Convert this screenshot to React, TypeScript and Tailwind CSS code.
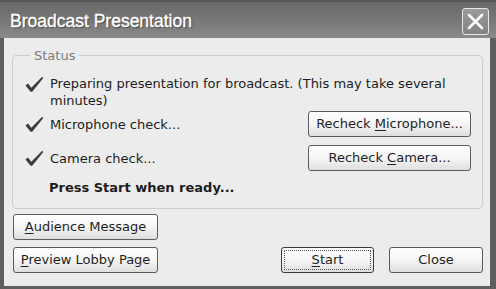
import React from 'react';

function Tick() {
  return (
    <svg width="19" height="17" viewBox="0 0 19 17" className="shrink-0">
      <path d="M0.5 9.5 L3 7.5 L6.3 11.8 L17.2 0.8 L18.3 1.9 L7.2 15.8 L5.6 15.8 Z" fill="#3b3b3b" />
    </svg>
  );
}

interface BtnProps {
  children: React.ReactNode;
  className?: string;
  focused?: boolean;
}

function Btn({ children, className = '', focused = false }: BtnProps) {
  return (
    <button
      className={`h-[26px] rounded-[3px] border ${focused ? 'border-[#3a3a3a]' : 'border-[#5c5c5c]'} bg-gradient-to-b from-[#ffffff] via-[#f6f6f6] to-[#dedede] p-[2px] text-[13px] text-[#1e1e1e] ${className}`}
    >
      <span
        className={`flex h-full w-full items-center justify-center whitespace-pre rounded-[1px] border ${focused ? 'border-dotted border-[#555]' : 'border-transparent'}`}
      >
        {children}
      </span>
    </button>
  );
}

export default function App() {
  return (
    <div className="flex h-[289px] w-[496px] flex-col bg-[#5f5f5f] font-['DejaVu_Sans',sans-serif]">
      {/* Title bar */}
      <div className="flex h-[38px] shrink-0 items-center justify-between border-t-2 border-[#555] bg-gradient-to-b from-[#6a6a6a] via-[#777777] to-[#8a8a8a] pl-[10px] pr-[7px]">
        <span className="pt-[3px] font-['Liberation_Sans',Arial,sans-serif] text-[17.5px] text-white [-webkit-text-stroke:0.35px_#fff] [text-shadow:1px_1px_1px_#3a3a3a]">
          Broadcast Presentation
        </span>
        <div className="mt-[3px] flex h-[27px] w-[27px] items-center justify-center rounded-[3px] border border-[#e8e8e8] bg-gradient-to-b from-[#9a9a9a] to-[#828282]">
          <svg width="17" height="17" viewBox="0 0 17 17">
            <path d="M2 2 L15 15 M15 2 L2 15" stroke="#fff" strokeWidth="2.6" strokeLinecap="round" />
          </svg>
        </div>
      </div>

      {/* Body */}
      <div className="mb-[3px] ml-[4px] mr-[6px] flex flex-1 flex-col bg-[#ececec] pl-[8px] pr-[7px] pt-[10px] text-[13px] text-[#1c1c1c]">
        <fieldset className="h-[161px] rounded-[4px] border border-[#cdcdcd] pl-[12px] pr-[11px]">
          <legend className="ml-[5px] px-[4px] text-[13px] leading-[15px] text-[#7c7c7c]">Status</legend>

          <div className="mt-[12px] flex items-start gap-[6px] leading-[17px]">
            <span className="pt-[1px]"><Tick /></span>
            <span>
              Preparing presentation for broadcast. (This may take several
              <br />
              minutes)
            </span>
          </div>

          <div className="mt-[2px] flex h-[26px] items-center">
            <Tick />
            <span className="ml-[6px] flex-1 pt-[1px]">Microphone check...</span>
            <Btn className="w-[163px]">
              {'Recheck '}<u className="underline-offset-2">M</u>{'icrophone...'}
            </Btn>
          </div>

          <div className="mt-[8px] flex h-[26px] items-center">
            <Tick />
            <span className="ml-[6px] flex-1 pt-[2px]">Camera check...</span>
            <Btn className="w-[163px]">
              {'Recheck '}<u className="underline-offset-2">C</u>{'amera...'}
            </Btn>
          </div>

          <div className="mt-[8px] pl-[24px] font-bold leading-[17px]">Press Start when ready...</div>
        </fieldset>

        <div className="mt-[5px] flex items-end">
          <div className="flex flex-col gap-[7px] pl-[1px]">
            <Btn className="w-[145px]">
              <u className="underline-offset-2">A</u>{'udience Message'}
            </Btn>
            <Btn className="w-[145px]">
              <u className="underline-offset-2">P</u>{'review Lobby Page'}
            </Btn>
          </div>
          <div className="ml-auto flex gap-[15px]">
            <Btn focused className="w-[93px]">
              <u className="underline-offset-2">S</u>{'tart'}
            </Btn>
            <Btn className="w-[94px]">Close</Btn>
          </div>
        </div>
      </div>
    </div>
  );
}
